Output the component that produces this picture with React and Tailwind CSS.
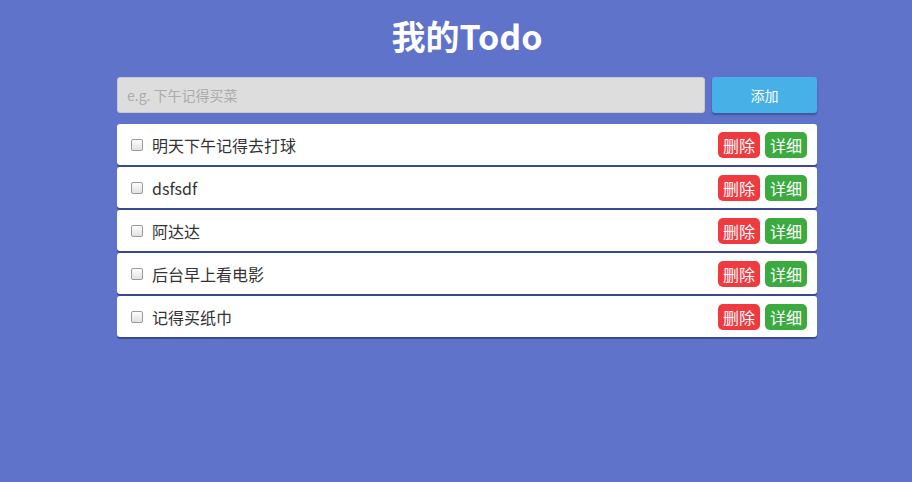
const todos = ['明天下午记得去打球', 'dsfsdf', '阿达达', '后台早上看电影', '记得买纸巾'];

const TodoRow = ({ text }) => (
  <div className="flex items-center h-[41px] bg-white rounded-[3px] shadow-[0_2px_0_#3b4994] pl-[14px] pr-[10px]">
    <span className="w-[12px] h-[12px] rounded-[2px] border border-[#9a9a9a] bg-gradient-to-b from-[#fdfdfd] to-[#e2e2e2] shrink-0" />
    <span className="ml-[9px] text-[16px] text-[#333] leading-none">{text}</span>
    <div className="ml-auto flex gap-[5px]">
      <button className="h-[26px] px-[5px] rounded-[5px] bg-[#ef3b3f] text-white text-[16px] leading-none">删除</button>
      <button className="h-[26px] px-[5px] rounded-[5px] bg-[#3cab3f] text-white text-[16px] leading-none">详细</button>
    </div>
  </div>
);

export default function App() {
  return (
    <div
      className="min-h-[482px] bg-[#6073cb] pl-[22px] flex justify-center"
      style={{ fontFamily: '"Noto Sans CJK SC", "Noto Sans", sans-serif' }}
    >
      <div className="w-[700px]">
        {/* Header */}
        <h1 className="pt-[14px] h-[77px] text-center text-white text-[34px] font-bold leading-[44px]">我的Todo</h1>

        {/* Input */}
        <div className="flex gap-[7px] h-[36px]">
          <input
            className="flex-1 h-full bg-[#dddddd] border border-[#c9c9c9] rounded-[3px] px-[9px] text-[14px] text-[#333] placeholder:text-[#ababab] outline-none"
            placeholder="e.g. 下午记得买菜"
          />
          <button className="w-[105px] h-full bg-[#46b0e7] rounded-[3px] text-white text-[14px] shadow-[0_2px_2px_rgba(40,50,110,0.5)]">添加</button>
        </div>

        {/* List */}
        <div className="mt-[11px] flex flex-col gap-[2px]">
          {todos.map((t) => (
            <TodoRow key={t} text={t} />
          ))}
        </div>
      </div>
    </div>
  );
}
